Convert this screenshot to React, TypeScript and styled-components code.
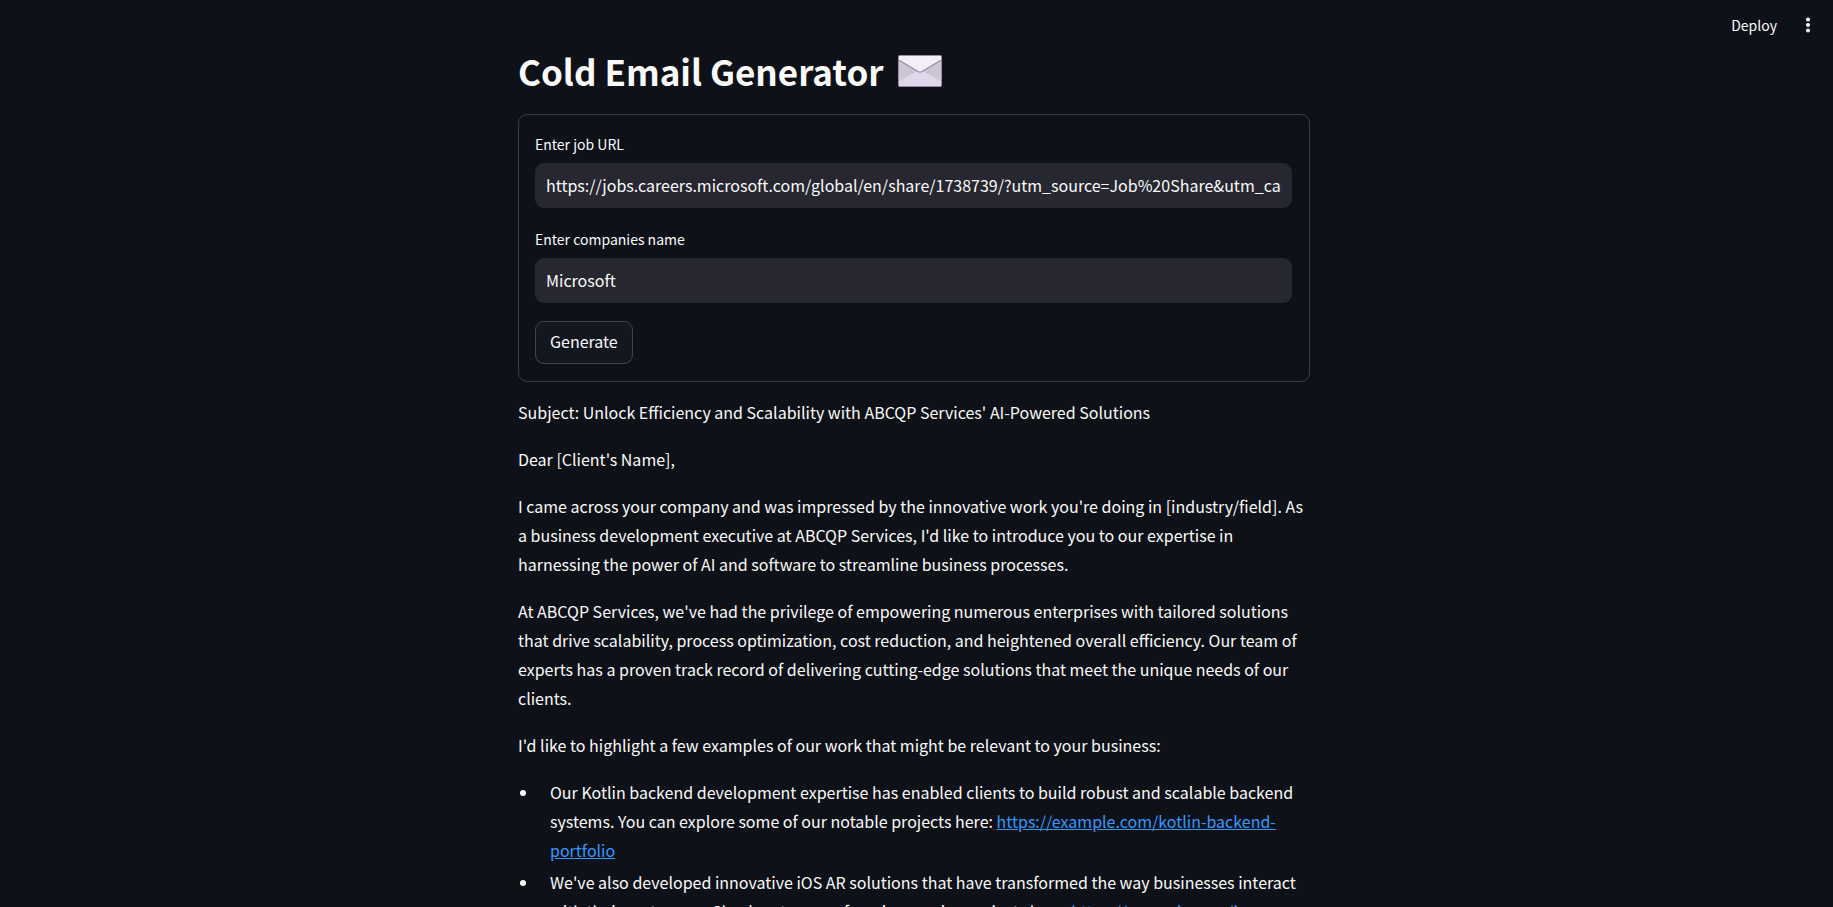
import React, { useState } from "react";
import styled, { createGlobalStyle } from "styled-components";

const GlobalStyle = createGlobalStyle`
  *, *::before, *::after { box-sizing: border-box; }
  body {
    margin: 0;
    background: #0e1117;
    color: #fafafa;
    font-family: "Noto Sans CJK SC", "Noto Sans", sans-serif;
    font-size: 16px;
    line-height: 29px;
  }
`;

const Page = styled.div`
  position: relative;
  height: 100vh;
  overflow: hidden;
`;

const Toolbar = styled.header`
  position: absolute;
  top: 0;
  right: 0;
  z-index: 1;
  display: flex;
  align-items: center;
  gap: 13px;
  height: 50px;
  padding-right: 15px;
`;

const ToolbarButton = styled.button`
  display: flex;
  align-items: center;
  padding: 4px 8px;
  border: 0;
  border-radius: 8px;
  background: transparent;
  color: inherit;
  font: inherit;
  font-size: 14px;
  line-height: 20px;
  cursor: pointer;
`;

const Scroller = styled.main`
  height: 100%;
  overflow-y: auto;
  scrollbar-width: none;
  padding: 44px 5px 64px 0;
`;

const Column = styled.div`
  display: flex;
  flex-direction: column;
  gap: 16px;
  width: 100%;
  max-width: 792px;
  margin: 0 auto;
`;

const Title = styled.h1`
  display: flex;
  align-items: center;
  gap: 14px;
  margin: 0;
  font-size: 35px;
  line-height: 54px;
  font-weight: 700;
`;

const Form = styled.form`
  display: flex;
  flex-direction: column;
  gap: 18px;
  padding: 16px 17px 17px 16px;
  border: 1px solid #3b3d42;
  border-radius: 9px;
`;

const Field = styled.div`
  display: flex;
  flex-direction: column;
  gap: 6px;
`;

const Label = styled.label`
  font-size: 14px;
  line-height: 26px;
`;

const TextInput = styled.input`
  width: 100%;
  height: 45px;
  padding: 0 10px 2px 11px;
  border: 0;
  border-radius: 9px;
  outline: 0;
  background: #262730;
  color: inherit;
  font: inherit;
`;

const SubmitButton = styled.button`
  align-self: flex-start;
  height: 43px;
  padding: 0 14px 2px;
  border: 1px solid #41444c;
  border-radius: 9px;
  background: #131720;
  color: inherit;
  font: inherit;
  cursor: pointer;
`;

const Email = styled.article`
  display: flex;
  flex-direction: column;
  gap: 18px;
`;

const Paragraph = styled.p`
  margin: 0;
`;

const List = styled.ul`
  display: flex;
  flex-direction: column;
  gap: 3px;
  margin: 0;
  padding: 0 0 0 21px;
`;

const ListItem = styled.li`
  padding-left: 11px;
`;

const Link = styled.a`
  color: #3399ff;
  text-decoration: underline;
`;

const Envelope = () => (
  <svg width="44" height="32" viewBox="0 0 44 33" preserveAspectRatio="none" role="img" aria-label="Envelope">
    <rect x="0" y="0" width="44" height="33" rx="2" fill="#998ea4" />
    <rect x="1" y="1" width="42" height="31" rx="1" fill="#cdc4d6" />
    <path d="M1 27 L22 15 L43 27 V31 Q43 32 42 32 H2 Q1 32 1 31Z" fill="#e1d8ec" />
    <path d="M1 2 Q1 1 2 1 H42 Q43 1 43 2 V5 L24 17 Q22 18.4 20 17 L1 5Z" fill="#f3eef8" />
    <path d="M1 5.5 L20 17 Q22 18.4 24 17 L43 5.5" fill="none" stroke="#998ea4" strokeWidth="1.3" />
  </svg>
);

const MoreIcon = () => (
  <svg width="4" height="16" viewBox="0 0 4 16" fill="currentColor" aria-hidden="true">
    <circle cx="2" cy="2.5" r="2" />
    <circle cx="2" cy="8" r="2" />
    <circle cx="2" cy="13.5" r="2" />
  </svg>
);

const paragraphs = [
  "Subject: Unlock Efficiency and Scalability with ABCQP Services' AI-Powered Solutions",
  "Dear [Client's Name],",
  "I came across your company and was impressed by the innovative work you're doing in [industry/field]. As a business development executive at ABCQP Services, I'd like to introduce you to our expertise in harnessing the power of AI and software to streamline business processes.",
  "At ABCQP Services, we've had the privilege of empowering numerous enterprises with tailored solutions that drive scalability, process optimization, cost reduction, and heightened overall efficiency. Our team of experts has a proven track record of delivering cutting-edge solutions that meet the unique needs of our clients.",
  "I'd like to highlight a few examples of our work that might be relevant to your business:",
];

const examples = [
  {
    text: "Our Kotlin backend development expertise has enabled clients to build robust and scalable backend systems. You can explore some of our notable projects here: ",
    url: "https://example.com/kotlin-backend-portfolio",
  },
  {
    text: "We've also developed innovative iOS AR solutions that have transformed the way businesses interact with their customers. Check out some of our impressive projects here: ",
    url: "https://example.com/ios-ar-portfolio",
  },
];

export default function App() {
  const [url, setUrl] = useState(
    "https://jobs.careers.microsoft.com/global/en/share/1738739/?utm_source=Job%20Share&utm_campaign=Copy-job-share"
  );
  const [company, setCompany] = useState("Microsoft");

  return (
    <Page>
      <GlobalStyle />
      <Toolbar>
        <ToolbarButton type="button">Deploy</ToolbarButton>
        <ToolbarButton type="button" aria-label="Main menu">
          <MoreIcon />
        </ToolbarButton>
      </Toolbar>
      <Scroller>
        <Column>
          <Title>
            Cold Email Generator
            <Envelope />
          </Title>
          <Form onSubmit={(e) => e.preventDefault()}>
            <Field>
              <Label htmlFor="job-url">Enter job URL</Label>
              <TextInput id="job-url" type="text" value={url} onChange={(e) => setUrl(e.target.value)} />
            </Field>
            <Field>
              <Label htmlFor="company">Enter companies name</Label>
              <TextInput id="company" type="text" value={company} onChange={(e) => setCompany(e.target.value)} />
            </Field>
            <SubmitButton type="submit">Generate</SubmitButton>
          </Form>
          <Email>
            {paragraphs.map((text) => (
              <Paragraph key={text}>{text}</Paragraph>
            ))}
            <List>
              {examples.map(({ text, url: href }) => (
                <ListItem key={href}>
                  {text}
                  <Link href={href}>{href}</Link>
                </ListItem>
              ))}
            </List>
          </Email>
        </Column>
      </Scroller>
    </Page>
  );
}
